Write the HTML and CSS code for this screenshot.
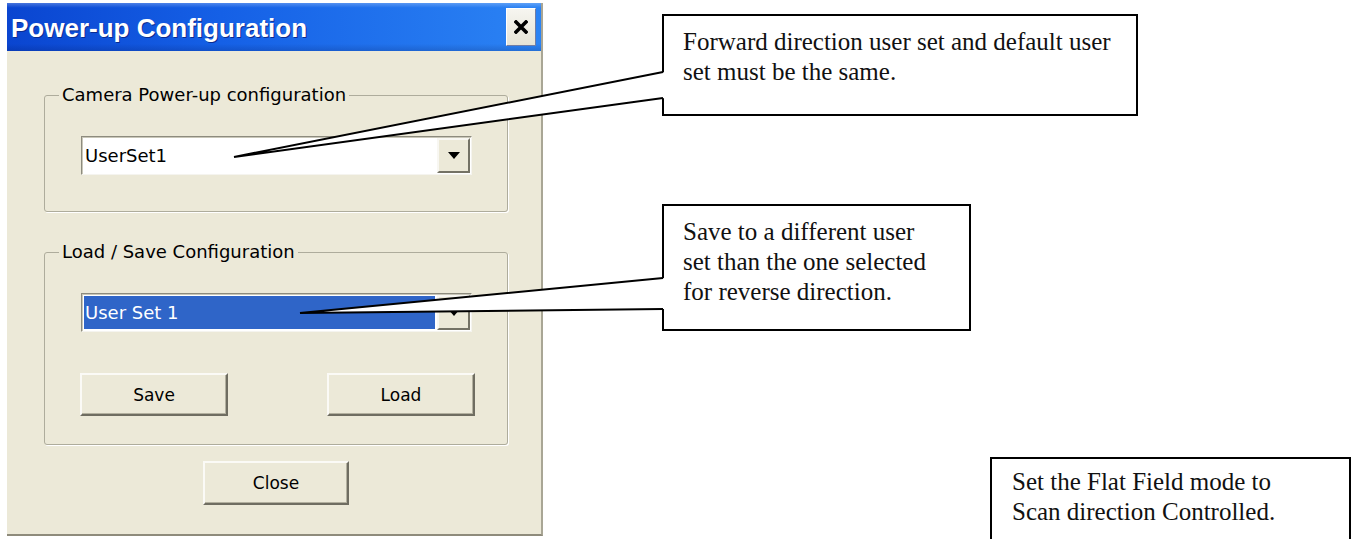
FILE: index.html
```html
<!DOCTYPE html>
<html lang="en">
<head>
  <meta charset="UTF-8">
  <title>Power-up Configuration</title>
  <link rel="stylesheet" href="styles.css">
</head>
<body>
  <div class="page">
    <div class="window">
      <div class="titlebar">
        <span class="title">Power-up Configuration</span>
        <button class="close-x" type="button">
          <svg width="14" height="14" viewBox="0 0 14 14"><path d="M2 2 L12 12 M12 2 L2 12" stroke="#000" stroke-width="3.6" stroke-linecap="square"/></svg>
        </button>
      </div>
      <div class="client">
        <fieldset class="group">
          <legend>Camera Power-up configuration</legend>
          <div class="combo">
            <span class="value">UserSet1</span>
            <span class="drop"><svg width="12" height="7" viewBox="0 0 12 7"><polygon points="0,0 12,0 6,7" fill="#000"/></svg></span>
          </div>
        </fieldset>
        <fieldset class="group group-save">
          <legend>Load / Save Configuration</legend>
          <div class="combo">
            <span class="value selected">User Set 1</span>
            <span class="drop"><svg width="12" height="7" viewBox="0 0 12 7"><polygon points="0,0 12,0 6,7" fill="#000"/></svg></span>
          </div>
          <div class="buttons">
            <button class="btn" type="button">Save</button>
            <button class="btn" type="button">Load</button>
          </div>
        </fieldset>
        <button class="btn btn-close" type="button">Close</button>
      </div>
    </div>

    <div class="note note-forward">
      Forward direction user set and default user<br>set must be the same.
    </div>
    <div class="note note-save">
      Save to a different user<br>set than the one selected<br>for reverse direction.
    </div>
    <div class="note note-flat">
      Set the Flat Field mode to<br>Scan direction Controlled.
    </div>

    <!-- callout pointers drawn over the dialog -->
    <svg class="pointers" width="1354" height="539" viewBox="0 0 1354 539">
      <polygon points="665,72 234,157 665,98" fill="#fff"/>
      <polyline points="663,72 234,157 663,98" fill="none" stroke="#000" stroke-width="2"/>
      <polygon points="665,278 300,313 665,309" fill="#fff"/>
      <polyline points="663,278 300,313 663,309" fill="none" stroke="#000" stroke-width="2"/>
    </svg>
  </div>
</body>
</html>
```

FILE: styles.css
```css
body {
  margin: 0;
  background: #fff;
  font-family: "DejaVu Sans", sans-serif;
}
.page {
  position: relative;
  width: 1354px;
  height: 539px;
  overflow: hidden;
  padding: 3px 0 0 7px;
  box-sizing: border-box;
}
.window {
  width: 536px;
  height: 533px;
  box-sizing: border-box;
  display: flex;
  flex-direction: column;
  background: #ece9d8;
  border-right: 2px solid #a9a695;
  border-bottom: 2px solid #8e8b7b;
}
.titlebar {
  height: 48px;
  display: flex;
  align-items: center;
  justify-content: space-between;
  padding: 0 5px 0 4px;
  background:
    linear-gradient(180deg, rgba(255,255,255,0.25) 0, rgba(255,255,255,0) 10%, rgba(0,0,0,0) 85%, rgba(0,0,40,0.15) 100%),
    linear-gradient(90deg, #0a45d0 0%, #1560e6 40%, #2b83f4 100%);
}
.title {
  color: #fff;
  font: bold 26px "Liberation Sans", Arial, sans-serif;
  text-shadow: 1px 1px 0 #0b2c90;
  padding-top: 2px;
}
.close-x {
  width: 30px;
  height: 38px;
  padding: 0;
  display: flex;
  align-items: center;
  justify-content: center;
  background: linear-gradient(180deg, #f6f5f0, #e6e3d6);
  border: 1px solid;
  border-color: #fff #6f7da6 #6f7da6 #fff;
}
.client {
  flex: 1;
  display: flex;
  flex-direction: column;
  padding: 0 33px 0 37px;
}
.group {
  margin: 33px 0 0;
  padding: 30px 35px 36px 14px;
  min-width: 0;
  border: 1px solid #aeac9c;
  border-radius: 3px;
  box-shadow: 1px 1px 0 #fff;
}
.group-save {
  margin-top: 29px;
  padding-bottom: 28px;
}
legend {
  padding: 0 3px;
  font-size: 18px;
  line-height: 22px;
  color: #000;
}
.combo {
  margin-left: 22px;
  height: 39px;
  box-sizing: border-box;
  display: flex;
  padding: 1px;
  background: #fff;
  border: 1px solid;
  border-color: #8d8b7e #f5f4ef #f5f4ef #8d8b7e;
  box-shadow: inset 1px 1px 0 #c9c7b9;
}
.value {
  flex: 1;
  display: flex;
  align-items: center;
  padding-left: 2px;
  font-size: 18px;
  color: #000;
}
.value.selected {
  margin: 1px 2px 1px 1px;
  padding-left: 1px;
  background: #2f65c8;
  color: #fff;
}
.drop {
  width: 29px;
  display: flex;
  align-items: center;
  justify-content: center;
  background: #ece9d8;
  border: 2px solid;
  border-color: #f8f7f2 #747265 #747265 #f8f7f2;
}
.buttons {
  display: flex;
  justify-content: space-between;
  margin: 41px -3px 0 21px;
}
.btn {
  width: 148px;
  height: 43px;
  padding: 0;
  background: #ece9d8;
  border: 2px solid;
  border-color: #fbfaf6 #6f6d61 #6f6d61 #fbfaf6;
  box-shadow: inset -1px -1px 0 #b3b09f;
  font: 17px "DejaVu Sans", sans-serif;
  color: #000;
}
.btn-close {
  align-self: center;
  width: 146px;
  height: 44px;
  margin-top: 16px;
}
.note {
  position: absolute;
  box-sizing: border-box;
  background: #fff;
  border: 2px solid #000;
  font: 25px/30px "Liberation Serif", "Times New Roman", serif;
  color: #111;
  padding: 11px 0 0 19px;
}
.note-forward {
  left: 662px;
  top: 14px;
  width: 476px;
  height: 102px;
}
.note-save {
  left: 662px;
  top: 204px;
  width: 309px;
  height: 127px;
}
.note-flat {
  left: 990px;
  top: 457px;
  width: 361px;
  height: 110px;
  padding: 8px 0 0 20px;
}
.pointers {
  position: absolute;
  left: 0;
  top: 0;
  pointer-events: none;
}
```
